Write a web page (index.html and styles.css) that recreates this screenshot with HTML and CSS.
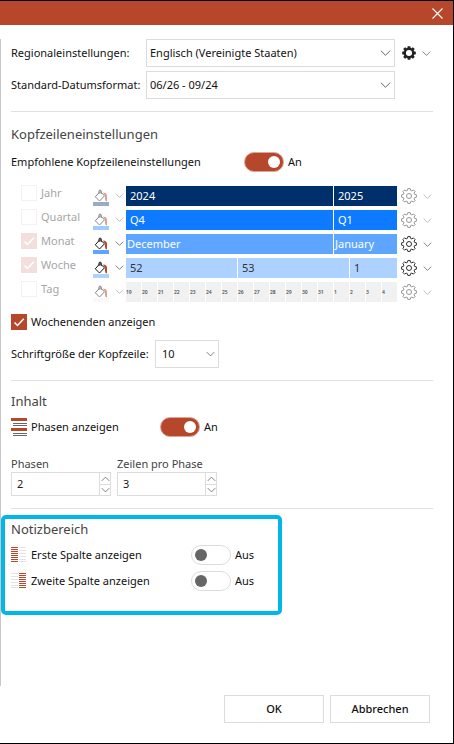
FILE: index.html
```html
<!DOCTYPE html>
<html lang="de">
<head>
<meta charset="utf-8">
<title>Einstellungen</title>
<link rel="stylesheet" href="styles.css">
</head>
<body>
<svg class="defs" aria-hidden="true">
  <symbol id="chevron" viewBox="0 0 12 8"><path d="M1 1.5 6 6.5 11 1.5" fill="none" stroke="currentColor"/></symbol>
  <symbol id="tick" viewBox="0 0 16 16"><path d="M3.5 8.5 6.5 11.5 12.8 4.7" fill="none" stroke="#fff" stroke-width="1.5"/></symbol>
  <symbol id="gear" viewBox="-8 -8 16 16">
    <path d="M-1.2-7.4H1.2L1.6-5.6 2.9-5.1 4.4-6.1 6.1-4.4 5.1-2.9 5.6-1.6 7.4-1.2V1.2L5.6 1.6 5.1 2.9 6.1 4.4 4.4 6.1 2.9 5.1 1.6 5.6 1.2 7.4H-1.2L-1.6 5.6-2.9 5.1-4.4 6.1-6.1 4.4-5.1 2.9-5.6 1.6-7.4 1.2V-1.2L-5.6-1.6-5.1-2.9-6.1-4.4-4.4-6.1-2.9-5.1-1.6-5.6Z" fill="none" stroke="currentColor" stroke-linejoin="round"/>
    <circle r="2.5" fill="none" stroke="currentColor"/>
  </symbol>
  <symbol id="gear-solid" viewBox="-8 -8 16 16">
    <path fill-rule="evenodd" fill="currentColor" d="M-1.5-7.8H1.5L1.9-5.8 2.8-5.4 4.5-6.6 6.6-4.5 5.4-2.8 5.8-1.9 7.8-1.5V1.5L5.8 1.9 5.4 2.8 6.6 4.5 4.5 6.6 2.8 5.4 1.9 5.8 1.5 7.8H-1.5L-1.9 5.8-2.8 5.4-4.5 6.6-6.6 4.5-5.4 2.8-5.8 1.9-7.8 1.5V-1.5L-5.8-1.9-5.4-2.8-6.6-4.5-4.5-6.6-2.8-5.4-1.9-5.8ZM0-3.5A3.5 3.5 0 1 0 0 3.5 3.5 3.5 0 1 0 0-3.5Z"/>
  </symbol>
  <symbol id="bucket" viewBox="0 0 16 13">
    <path d="M7 2.5 2.3 7.8 6.5 12 11.5 6.8 7 2.5M6 5V1.7Q7 .3 8.2 1.7V5" fill="none" stroke="currentColor"/>
    <path d="M10 3.5Q14 3.5 14 7V12.5Q12.2 12.5 12 10V7Z" fill="#b7472a"/>
  </symbol>
</svg>

<main class="dialog">
  <header class="titlebar">
    <button class="close" type="button" aria-label="Schließen"><svg width="11" height="11" viewBox="0 0 11 11"><path d="M.5.5 10.5 10.5M10.5.5.5 10.5" stroke="#fff" stroke-width="1.1"/></svg></button>
  </header>

  <form class="panel">
    <section class="section regional">
      <label for="region">Regionaleinstellungen:</label>
      <span class="drop"><select id="region"><option>Englisch (Vereinigte Staaten)</option></select><svg class="arrow"><use href="#chevron"/></svg></span>
      <button class="tool strong" type="button" aria-label="Optionen"><svg class="cog-solid"><use href="#gear-solid"/></svg><svg class="chev"><use href="#chevron"/></svg></button>
      <label for="format">Standard-Datumsformat:</label>
      <span class="drop"><select id="format"><option>06/26 - 09/24</option></select><svg class="arrow"><use href="#chevron"/></svg></span>
    </section>

    <section class="section header">
      <h2>Kopfzeileneinstellungen</h2>
      <div class="switch-row recommended">
        <label for="recommended">Empfohlene Kopfzeileneinstellungen</label>
        <input class="switch" id="recommended" type="checkbox" role="switch" checked><span>An</span>
      </div>

      <div class="scales">
        <div class="scale faded">
          <label class="check"><span class="box"><input type="checkbox" disabled></span>Jahr</label>
          <button class="fill year" type="button" aria-label="Farbe Jahr"><svg class="bucket"><use href="#bucket"/></svg><svg class="chev"><use href="#chevron"/></svg></button>
          <div class="bar year"><span class="span13">2024</span><span class="span4">2025</span></div>
          <button class="tool" type="button" aria-label="Optionen Jahr"><svg class="cog"><use href="#gear"/></svg><svg class="chev"><use href="#chevron"/></svg></button>
        </div>
        <div class="scale faded">
          <label class="check"><span class="box"><input type="checkbox" disabled></span>Quartal</label>
          <button class="fill quarter" type="button" aria-label="Farbe Quartal"><svg class="bucket"><use href="#bucket"/></svg><svg class="chev"><use href="#chevron"/></svg></button>
          <div class="bar quarter"><span class="span13">Q4</span><span class="span4">Q1</span></div>
          <button class="tool" type="button" aria-label="Optionen Quartal"><svg class="cog"><use href="#gear"/></svg><svg class="chev"><use href="#chevron"/></svg></button>
        </div>
        <div class="scale">
          <label class="check"><span class="box"><input type="checkbox" disabled checked><svg><use href="#tick"/></svg></span>Monat</label>
          <button class="fill month" type="button" aria-label="Farbe Monat"><svg class="bucket"><use href="#bucket"/></svg><svg class="chev"><use href="#chevron"/></svg></button>
          <div class="bar month"><span class="span13">December</span><span class="span4">January</span></div>
          <button class="tool" type="button" aria-label="Optionen Monat"><svg class="cog"><use href="#gear"/></svg><svg class="chev"><use href="#chevron"/></svg></button>
        </div>
        <div class="scale">
          <label class="check"><span class="box"><input type="checkbox" disabled checked><svg><use href="#tick"/></svg></span>Woche</label>
          <button class="fill week" type="button" aria-label="Farbe Woche"><svg class="bucket"><use href="#bucket"/></svg><svg class="chev"><use href="#chevron"/></svg></button>
          <div class="bar week"><span class="span7">52</span><span class="span7">53</span><span class="span3">1</span></div>
          <button class="tool" type="button" aria-label="Optionen Woche"><svg class="cog"><use href="#gear"/></svg><svg class="chev"><use href="#chevron"/></svg></button>
        </div>
        <div class="scale faded">
          <label class="check"><span class="box"><input type="checkbox" disabled></span>Tag</label>
          <button class="fill day" type="button" aria-label="Farbe Tag"><svg class="bucket"><use href="#bucket"/></svg><svg class="chev"><use href="#chevron"/></svg></button>
          <div class="bar day"><span>19</span><span>20</span><span>21</span><span>22</span><span>23</span><span>24</span><span>25</span><span>26</span><span>27</span><span>28</span><span>29</span><span>30</span><span>31</span><span>1</span><span>2</span><span>3</span><span>4</span></div>
          <button class="tool" type="button" aria-label="Optionen Tag"><svg class="cog"><use href="#gear"/></svg><svg class="chev"><use href="#chevron"/></svg></button>
        </div>
      </div>

      <label class="check weekends"><span class="box"><input type="checkbox" checked><svg><use href="#tick"/></svg></span>Wochenenden anzeigen</label>
      <div class="font-size">
        <label for="size">Schriftgröße der Kopfzeile:</label>
        <span class="drop small"><select id="size"><option>10</option></select><svg class="arrow"><use href="#chevron"/></svg></span>
      </div>
    </section>

    <section class="section content">
      <h2>Inhalt</h2>
      <div class="switch-row phases">
        <label for="phases"><svg class="glyph" viewBox="0 0 16 18"><path d="M0 0H16V3H0ZM0 10H16V13H0Z" fill="#b7472a"/><path d="M2 5.5H16M2 7.5H16M2 15.5H16M2 17.5H16" stroke="#666"/></svg>Phasen anzeigen</label>
        <input class="switch" id="phases" type="checkbox" role="switch" checked><span>An</span>
      </div>
      <div class="numbers">
        <div class="number">
          <label for="count">Phasen</label>
          <div class="spin"><input id="count" type="text" inputmode="numeric" value="2"><button type="button" aria-label="Phasen erhöhen"><svg class="up"><use href="#chevron"/></svg></button><button type="button" aria-label="Phasen verringern"><svg><use href="#chevron"/></svg></button></div>
        </div>
        <div class="number">
          <label for="lines">Zeilen pro Phase</label>
          <div class="spin"><input id="lines" type="text" inputmode="numeric" value="3"><button type="button" aria-label="Zeilen erhöhen"><svg class="up"><use href="#chevron"/></svg></button><button type="button" aria-label="Zeilen verringern"><svg><use href="#chevron"/></svg></button></div>
        </div>
      </div>
    </section>

    <section class="notes">
      <h2>Notizbereich</h2>
      <div class="switch-row">
        <label for="first"><svg class="glyph" viewBox="0 0 16 18"><path class="on" d="M0 1H7V2H0ZM0 3H7V4H0ZM0 5H7V6H0ZM0 7H7V8H0ZM0 9H7V10H0ZM0 11H7V12H0ZM0 13H7V14H0ZM0 15H7V16H0Z"/><path class="off" d="M8 1H15V2H8ZM8 4H15V5H8ZM8 7H15V8H8ZM8 10H15V11H8ZM8 13H15V14H8ZM8 15H15V16H8Z"/></svg>Erste Spalte anzeigen</label>
        <input class="switch" id="first" type="checkbox" role="switch"><span>Aus</span>
      </div>
      <div class="switch-row">
        <label for="second"><svg class="glyph" viewBox="0 0 16 18"><path class="off" d="M0 1H7V2H0ZM0 4H7V5H0ZM0 7H7V8H0ZM0 10H7V11H0ZM0 13H7V14H0ZM0 15H7V16H0Z"/><path class="on" d="M8 1H15V2H8ZM8 3H15V4H8ZM8 5H15V6H8ZM8 7H15V8H8ZM8 9H15V10H8ZM8 11H15V12H8ZM8 13H15V14H8ZM8 15H15V16H8Z"/></svg>Zweite Spalte anzeigen</label>
        <input class="switch" id="second" type="checkbox" role="switch"><span>Aus</span>
      </div>
    </section>
  </form>

  <footer class="actions">
    <button type="button">OK</button>
    <button type="button">Abbrechen</button>
  </footer>
</main>
</body>
</html>
```

FILE: styles.css
```css
* { box-sizing: border-box; }

body {
  margin: 0;
  font: 11px/20px "Noto Sans", "Open Sans", sans-serif;
  color: #111;
  background: #fff;
}

button, input, select { font: inherit; color: inherit; margin: 0; }
button { background: none; border: 0; padding: 0; }
svg { display: block; flex: none; }
label { white-space: nowrap; }
.defs { display: none; }

.dialog {
  min-height: 100vh;
  display: flex;
  flex-direction: column;
  border: 1px solid #000;
  border-left: 0;
}

.titlebar {
  height: 24px;
  display: flex;
  justify-content: flex-end;
  align-items: center;
  padding-right: 10px;
  background: #b7472a;
}

.panel {
  flex: 1;
  margin-top: 14px;
  padding: 0 20px 0 10px;
  border-left: 1px solid #c8c8c8;
}

.section { padding: 12px 0; border-bottom: 1px solid #e1e1e1; }

h2 {
  margin: 0;
  font-size: 13px;
  line-height: 20px;
  font-weight: 400;
  color: #444;
}

/* Drop-downs */
.drop { display: grid; align-items: center; }
.drop > * { grid-area: 1 / 1; }
.drop select {
  width: 100%;
  height: 28px;
  padding: 0 24px 0 3px;
  appearance: none;
  background: #fff;
  border: 1px solid #dcdcdc;
  border-radius: 0;
}
.arrow {
  width: 11px;
  height: 8px;
  margin-right: 4px;
  justify-self: end;
  pointer-events: none;
  color: #555;
}
.small { width: 64px; }
.small select { padding-left: 6px; }
.small .arrow { width: 9px; }

.regional {
  display: grid;
  grid-template-columns: 135px 1fr 38px;
  row-gap: 4px;
  align-items: center;
  padding-top: 0;
}
.regional .tool { margin-left: 7px; }

.tool { display: flex; align-items: center; gap: 6px; color: #333; }
.tool.strong { color: #222; }
.cog { width: 16px; height: 16px; }
.cog-solid { width: 14px; height: 14px; }
.chev { width: 9px; height: 7px; color: #555; }

/* Switches */
.switch-row { display: flex; align-items: center; height: 20px; }
.switch-row label { display: flex; align-items: center; width: 180px; }
.switch-row span { margin-left: 4px; }
.recommended { margin-top: 8px; }
.recommended label { width: 233px; }
.phases { margin-top: 6px; }
.phases label { width: 149px; }
.glyph { width: 16px; height: 18px; margin-right: 4px; shape-rendering: crispEdges; }
.on { fill: #b7472a; }
.off { fill: #e3e3e6; }

.switch {
  width: 40px;
  height: 20px;
  appearance: none;
  display: flex;
  align-items: center;
  padding: 0 3px;
  border: 1px solid #dcdcdc;
  border-radius: 10px;
  background: #fff;
}
.switch::before {
  content: "";
  width: 12px;
  height: 12px;
  border-radius: 50%;
  background: #666;
}
.switch:checked {
  justify-content: flex-end;
  border-color: #d9a89b;
  background: #b7472a;
}
.switch:checked::before { background: #fff; }

/* Time scale rows */
.scales { margin-top: 12px; padding-left: 10px; }
.scale {
  display: grid;
  grid-template-columns: 72px 33px 1fr 36px;
  align-items: start;
  height: 24px;
}
.scale > .check { color: #a6a6a6; }
.scale .tool { margin: 4px 0 0 4px; }
.faded .tool, .faded .bucket, .faded .fill .chev { opacity: .5; }

.check { display: flex; align-items: center; gap: 4px; height: 18px; }
.box { display: grid; width: 16px; height: 16px; }
.box > * { grid-area: 1 / 1; width: 16px; height: 16px; pointer-events: none; }
.box input { appearance: none; border: 1px solid #b0b0b0; background: #fff; }
.box input:checked { border-color: #b7472a; background: #b7472a; }
.box input:disabled { border-color: #f3f1f1; }
.box input:disabled:checked { border-color: #f3e0dc; background: #f3e0dc; }

.fill {
  display: grid;
  grid-template-columns: 16px 9px;
  column-gap: 6px;
  align-items: center;
  margin-top: 5px;
  color: #111;
}
.fill::after { content: ""; height: 4px; background: var(--tone); }
.faded .fill::after { opacity: .4; }
.bucket { width: 16px; height: 13px; }

.year { --tone: #00306b; }
.quarter { --tone: #0d7aff; }
.month { --tone: #5ea5ff; }
.week { --tone: #aed2ff; }
.day { --tone: #f1f1f1; }

.bar {
  display: grid;
  grid-template-columns: repeat(17, 1fr);
  column-gap: 1px;
  height: 20px;
  margin-top: 2px;
  color: #fff;
}
.bar span { min-width: 0; height: 20px; padding-left: 4px; background: var(--tone); line-height: 20px; }
.bar.month span { padding-left: 1px; }
.bar.week { color: #333; }
.bar .span13 { grid-column: span 13; }
.bar .span7 { grid-column: span 7; }
.bar .span4 { grid-column: span 4; }
.bar .span3 { grid-column: span 3; }
.bar.day { color: #555; font-size: 5px; font-weight: 600; }
.bar.day span { padding-left: 0; }

.weekends { height: 20px; margin-top: 8px; }
.font-size { display: flex; align-items: center; margin-top: 8px; }
.font-size label { width: 144px; }

/* Number fields */
.content { padding-top: 10px; }
.numbers { display: flex; gap: 6px; margin-top: 19px; }
.number { width: 100px; color: #444; }
.number label { display: block; line-height: 16px; }
.spin {
  display: grid;
  grid-template: 11px 11px / 1fr 11px;
  border: 1px solid #dcdcdc;
}
.spin input {
  grid-row: span 2;
  min-width: 0;
  padding: 0 5px;
  border: 0;
  color: #222;
}
.spin button {
  display: grid;
  place-items: center;
  border-left: 1px solid #dcdcdc;
}
.spin button + button { border-top: 1px solid #dcdcdc; }
.spin svg { width: 9px; height: 6px; color: #555; }
.up { transform: rotate(180deg); }

/* Highlighted group */
.notes {
  width: fit-content;
  margin: 6px 0 0 -10px;
  padding: 0 24px 20px 6px;
  border: 4px solid #00b7e5;
  border-radius: 5px;
}
.notes .switch-row { margin-top: 6px; }

.actions {
  display: flex;
  justify-content: flex-end;
  gap: 6px;
  padding: 9px 23px 20px;
}
.actions button {
  width: 100px;
  height: 28px;
  border: 1px solid #dcdcdc;
  font-weight: 500;
}
```
